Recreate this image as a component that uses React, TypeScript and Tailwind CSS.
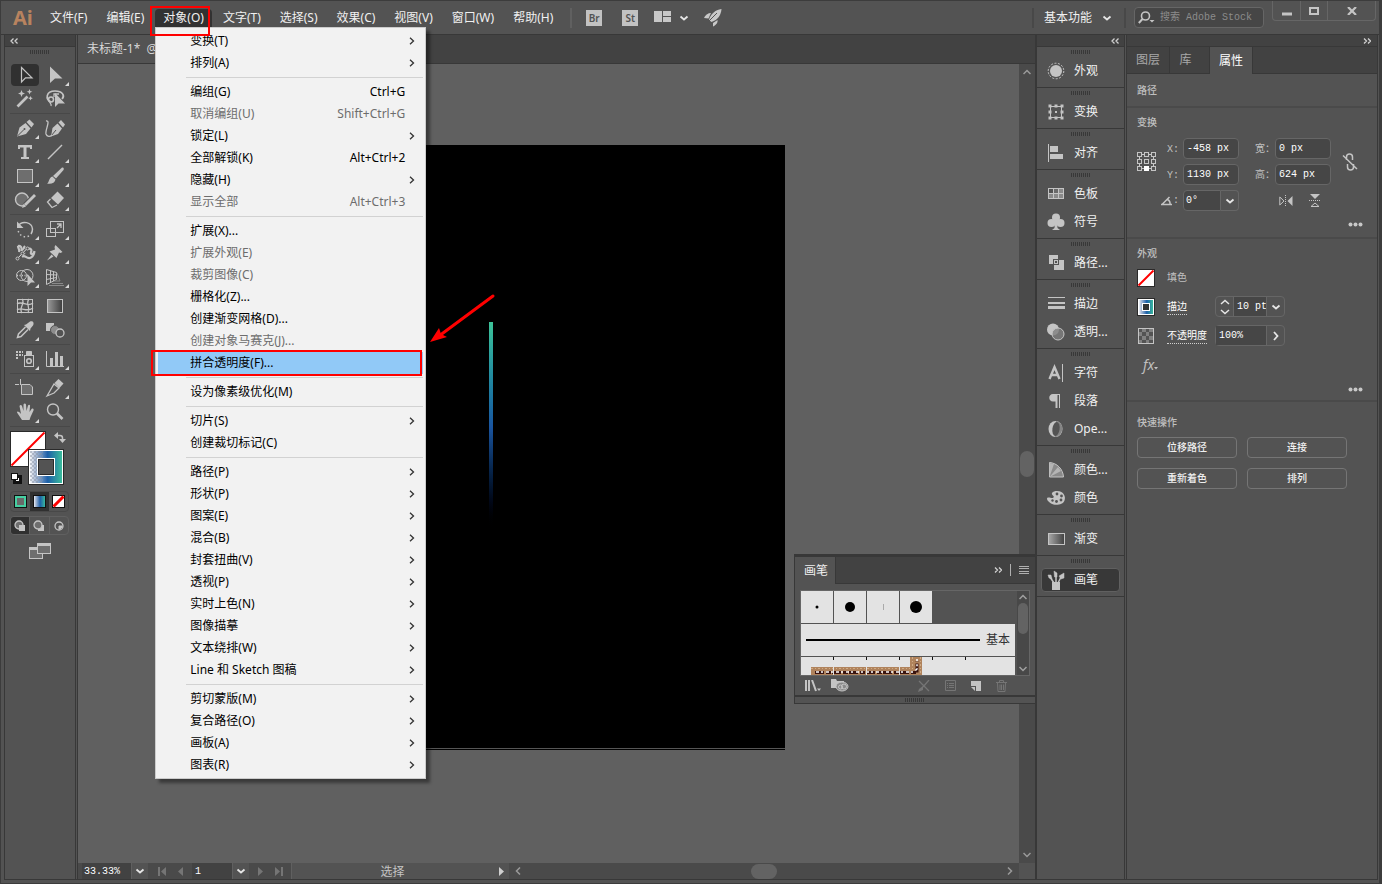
import React from "react";

type IconProps = { w?: number; h?: number; children: React.ReactNode };

function Svg({ w = 24, h = 24, children }: IconProps) {
  return (
    <svg
      width={w}
      height={h}
      viewBox={`0 0 ${w} ${h}`}
      fill="none"
      stroke="#c4c4c4"
      className="shrink-0"
      aria-hidden="true"
    >
      {children}
    </svg>
  );
}

function ChevronDown() {
  return (
    <Svg w={10} h={8}>
      <path d="M1.5 2.5 L5 5.5 L8.5 2.5" stroke="#e6e6e6" strokeWidth="1.8" />
    </Svg>
  );
}

function DoubleLeft() {
  return (
    <Svg w={8} h={6}>
      <path d="M3.5 .5 L1 3 L3.5 5.5 M7.5 .5 L5 3 L7.5 5.5" stroke="#d0d0d0" strokeWidth="1.3" />
    </Svg>
  );
}

function DoubleRight() {
  return (
    <Svg w={8} h={6}>
      <path d="M1 .5 L3.5 3 L1 5.5 M5 .5 L7.5 3 L5 5.5" stroke="#d0d0d0" strokeWidth="1.3" />
    </Svg>
  );
}

function Grip() {
  return (
    <Svg w={20} h={4}>
      <path d="M0 2 H20" stroke="#383838" strokeWidth="4" strokeDasharray="1 1" />
    </Svg>
  );
}

function Dots() {
  return (
    <Svg w={15} h={5}>
      <g fill="#c8c8c8" stroke="none">
        <circle cx="2.5" cy="2.5" r="2" />
        <circle cx="7.5" cy="2.5" r="2" />
        <circle cx="12.5" cy="2.5" r="2" />
      </g>
    </Svg>
  );
}

const F = "#c4c4c4";

const toolGroups: { name: string; more?: boolean; icon: React.ReactNode }[][] = [
  [
    { name: "选择工具", icon: <path d="M8.5 4.5 V19 L12.5 14.8 H19 Z" strokeWidth="1.2" /> },
    { name: "直接选择工具", more: true, icon: <path d="M7 3.5 V20 L12 15.5 H19.5 Z" fill={F} stroke="none" /> },
    {
      name: "魔棒工具",
      icon: (
        <>
          <path d="M4.5 19.5 L14.5 9.5" strokeWidth="2.6" />
          <g fill={F} stroke="none">
            <path d="M8.5 3 l1 2.5 2.5 1 -2.5 1 -1 2.5 -1 -2.5 -2.5 -1 2.5 -1z" />
            <path d="M16.5 2 l.8 2 2 .8 -2 .8 -.8 2 -.8 -2 -2 -.8 2 -.8z" />
            <path d="M17.5 9 l.7 1.6 1.6 .7 -1.6 .7 -.7 1.6 -.7 -1.6 -1.6 -.7 1.6 -.7z" />
          </g>
        </>
      ),
    },
    {
      name: "套索工具",
      icon: (
        <>
          <path d="M8 15 C2 12 3 4 12 4 C20 4 22 9 19 12" strokeWidth="1.7" />
          <circle cx="8" cy="12.5" r="2.5" strokeWidth="1.5" />
          <path d="M11 10 V7 H16 M7 14.5 C6 16 9 17 8 19" strokeWidth="1.3" />
          <path d="M12 6 V20 L15.5 16.5 H22 Z" fill={F} stroke="none" />
        </>
      ),
    },
  ],
  [
    {
      name: "钢笔工具",
      more: true,
      icon: (
        <>
          <path d="M4 20.5 L6.5 11.5 L12.5 7 L17.5 12.5 L13 18 Z" fill={F} stroke="none" />
          <path d="M13.5 6 L16.5 3.5 L21 8 L18.5 11.5 Z" fill={F} stroke="none" />
          <path d="M4.5 20 L11 13.5" stroke="#535353" />
          <circle cx="11.5" cy="13" r="1" fill="#535353" stroke="none" />
        </>
      ),
    },
    {
      name: "曲率工具",
      icon: (
        <>
          <path d="M8 20.5 L9.5 12 L14.5 7.5 L19 12.5 L15 18 Z" fill={F} stroke="none" />
          <path d="M15.5 6.5 L18 4 L22 8.5 L20 11.5 Z" fill={F} stroke="none" />
          <path d="M8 20 L13 14" stroke="#535353" />
          <path d="M3 5 C8 4 2 14 3 18 C4 21 7 21 9 19" strokeWidth="1.3" />
        </>
      ),
    },
    {
      name: "文字工具",
      more: true,
      icon: <path d="M5 5 H19 V9 H17 V7.5 H13.5 V17 H16 V19 H8 V17 H10.5 V7.5 H7 V9 H5 Z" fill={F} stroke="none" />,
    },
    { name: "直线段工具", more: true, icon: <path d="M5 19 L19 5" strokeWidth="1.5" /> },
    { name: "矩形工具", more: true, icon: <rect x="4.5" y="5.5" width="15" height="13" fill="#6e6e6e" /> },
    {
      name: "画笔工具",
      more: true,
      icon: (
        <g fill={F} stroke="none">
          <path d="M10 12 L19 3.5 C21 3 21 5 20.5 6 L13 14.5 Z" />
          <path d="M9.5 12.5 L12.5 15.5 C12 19 8 20.5 4 19.5 C6.5 18.5 5.5 13.5 9.5 12.5 Z" />
        </g>
      ),
    },
    {
      name: "Shaper 工具",
      more: true,
      icon: (
        <>
          <circle cx="9" cy="11.5" r="6.5" fill="#6e6e6e" strokeWidth="1.4" />
          <path d="M12 17 L21 8" stroke="#535353" strokeWidth="5" />
          <path d="M12 17 L22 7" strokeWidth="2.8" />
          <path d="M9 20 L10.5 16 L13 18.5 Z" fill={F} stroke="none" />
        </>
      ),
    },
    {
      name: "橡皮擦工具",
      more: true,
      icon: (
        <>
          <path d="M8 10 L14.5 3.5 L21 10 L15 16.5 Z" fill={F} stroke="none" />
          <path d="M7.5 11 L4.5 14 L9 19.5 L14 17" strokeWidth="1.3" />
        </>
      ),
    },
  ],
  [
    {
      name: "旋转工具",
      more: true,
      icon: (
        <>
          <path d="M5 9 C9 3 19 5 19.5 12 C19.5 14 19 15.5 18 17" strokeWidth="1.5" />
          <path d="M16 19 C12 21 6 19 5 13" strokeWidth="1.5" strokeDasharray="1.5 2.5" />
          <path d="M4 4.5 V11 H10.5 Z" fill={F} stroke="none" />
        </>
      ),
    },
    {
      name: "比例缩放工具",
      more: true,
      icon: (
        <>
          <rect x="7.5" y="4.5" width="13" height="11" />
          <rect x="3.5" y="11.5" width="9" height="8" />
          <path d="M14 11 L17.5 7.5 M14 7 H18 V11" strokeWidth="1.3" />
        </>
      ),
    },
    {
      name: "宽度工具",
      more: true,
      icon: (
        <>
          <path
            d="M5 5 C8 4 9 7 8.5 10 M12 5 C9 8 12 11 11 13 M15 8 C18 7 19 9 18 11 C17 14 21 14 21.5 10 M9 16 C12 13 13 18 17 17 C20 16 21 14 21.5 10 M6 11 C7 8 5 8 5 5"
            strokeWidth="2.2"
          />
          <path d="M4.5 17.5 L14.5 7" stroke="#535353" strokeWidth="3" />
          <path d="M4.5 17.5 L14.5 7" stroke="#e0e0e0" />
          <circle cx="4.5" cy="17.5" r="1.5" fill="#535353" />
          <circle cx="9.5" cy="12.5" r="1.5" fill="#535353" />
          <circle cx="14.5" cy="7.5" r="1.5" fill="#535353" />
        </>
      ),
    },
    {
      name: "操控变形工具",
      more: true,
      icon: (
        <g fill={F} stroke="none">
          <path d="M12.5 4 L19.5 11 L17.5 12 L16 11.5 L13.5 17 L6.5 10.5 L12 8.5 L11.5 6 Z" />
          <path d="M8.5 13.5 L10.5 15.5 L4 19.5 Z" />
        </g>
      ),
    },
    {
      name: "形状生成器工具",
      more: true,
      icon: (
        <>
          <circle cx="8.5" cy="10.5" r="5" />
          <circle cx="14" cy="10.5" r="6" />
          <path d="M4 10.5 H15" strokeDasharray="1 1.5" strokeWidth="1.5" />
          <path d="M14.5 9 V21 L18 17.5 H22 Z" fill={F} stroke="none" />
        </>
      ),
    },
    {
      name: "透视网格工具",
      more: true,
      icon: (
        <>
          <path d="M3.5 4.5 L13.5 7.5 V14.5 L3.5 19.5 Z M3.5 9.5 L13.5 10 M3.5 14.5 L13.5 12.5 M7.5 5.5 V17.5 M10.5 6.5 V16" />
          <path d="M14 8 L17 16 H11 M9 18.5 H20 M6 20.5 H21" stroke="#8a8a8a" />
        </>
      ),
    },
  ],
  [
    {
      name: "网格工具",
      icon: (
        <>
          <rect x="4.5" y="5.5" width="15" height="13" />
          <path d="M4 10 C9 6 14 14 20 9 M4 16 C9 12 13 19 20 14 M9 5 C13 9 5 14 9 19 M16 5 C12 10 18 13 15 19" strokeWidth="1.3" />
        </>
      ),
    },
    {
      name: "渐变工具",
      icon: (
        <>
          <defs>
            <linearGradient id="toolGrad">
              <stop offset="0" stopColor="#9a9a9a" />
              <stop offset="1" stopColor="#3c3c3c" />
            </linearGradient>
          </defs>
          <rect x="4.5" y="5.5" width="15" height="13" fill="url(#toolGrad)" />
        </>
      ),
    },
    {
      name: "吸管工具",
      more: true,
      icon: (
        <>
          <path d="M12.5 9 L5.5 16 L4.5 19.5 L8 18.5 L15 11.5" strokeWidth="1.5" />
          <path d="M11 7 L13 6.5 L17 3.5 C20 2.5 21.5 5 20 7.5 L17.5 10.5 L17 13 Z" fill={F} stroke="none" />
        </>
      ),
    },
    {
      name: "混合工具",
      icon: (
        <>
          <rect x="3" y="5" width="8" height="8" fill={F} stroke="none" />
          <circle cx="12" cy="12" r="4.5" fill="#8c8c8c" stroke="#535353" />
          <circle cx="17" cy="15" r="4" fill="#535353" strokeWidth="1.3" />
        </>
      ),
    },
  ],
  [
    {
      name: "符号喷枪工具",
      more: true,
      icon: (
        <>
          <path d="M3 5 H10 M3 8 H10 M3 11 H6" strokeWidth="2" strokeDasharray="2 1" />
          <rect x="11.5" y="8.5" width="9" height="11" />
          <path d="M13.5 4.5 H18.5 V8 H13.5 Z" fill={F} />
          <circle cx="16" cy="14" r="2.3" strokeWidth="1.6" />
        </>
      ),
    },
    {
      name: "柱形图工具",
      more: true,
      icon: (
        <>
          <path d="M3.5 4 V19.5 H21" />
          <path d="M8.5 19 V11 M13.5 19 V5 M18.5 19 V9" strokeWidth="3" />
        </>
      ),
    },
  ],
  [
    {
      name: "画板工具",
      icon: (
        <>
          <path d="M7.5 3 V9 M2 8.5 H6" />
          <path d="M8.5 8.5 H17 L19.5 11 V18.5 H8.5 Z" fill="#6e6e6e" />
        </>
      ),
    },
    {
      name: "切片工具",
      more: true,
      icon: (
        <>
          <path d="M4 20 L11 8 L16 12 L11 17 Z" strokeWidth="1.3" />
          <path d="M11.5 7 L15.5 3 L20.5 7.5 L16.5 12 Z" fill={F} stroke="none" />
        </>
      ),
    },
    {
      name: "抓手工具",
      more: true,
      icon: (
        <path
          d="M9 20 L4 12.5 C4 11 5.5 11 8 14 L6.5 6 C7 4.5 8.5 4.5 9 6 L10.5 11 V4.5 C11 3 12.5 3 13 4.5 L13.5 11 L15 5.5 C16 4 17.5 5 17 6.5 L16.5 12 L18.5 9 C20 8 21 9 20.5 10.5 L17.5 17 L16.5 20 Z"
          fill={F}
          stroke="none"
        />
      ),
    },
    {
      name: "缩放工具",
      icon: (
        <>
          <circle cx="10" cy="9.5" r="5.5" strokeWidth="1.4" />
          <path d="M14 13.5 L19.5 19" strokeWidth="2.6" />
        </>
      ),
    },
  ],
];

const dockGroups: { label: string; active?: boolean; icon: React.ReactNode }[][] = [
  [
    {
      label: "外观",
      icon: (
        <>
          <circle cx="10" cy="10" r="6" fill={F} stroke="none" />
          <circle cx="10" cy="10" r="7.8" strokeDasharray="2 1.5" />
        </>
      ),
    },
  ],
  [
    {
      label: "变换",
      icon: (
        <>
          <rect x="4.5" y="4.5" width="11" height="11" />
          <path d="M9 10 h2" strokeWidth="2" />
          <path
            d="M2.5 4 h3 M8.5 4 h3 M14.5 4 h3 M2.5 10 h3 M14.5 10 h3 M2.5 16 h3 M8.5 16 h3 M14.5 16 h3"
            strokeWidth="3"
          />
        </>
      ),
    },
  ],
  [
    {
      label: "对齐",
      icon: (
        <g fill={F} stroke="none">
          <rect x="2" y="1" width="1" height="18" />
          <rect x="4" y="3" width="8" height="6" />
          <rect x="4" y="11" width="13" height="5" />
        </g>
      ),
    },
  ],
  [
    {
      label: "色板",
      icon: (
        <>
          <rect x="2.5" y="4.5" width="15" height="10" fill="#8a8a8a" />
          <rect x="3" y="5" width="4" height="4" fill="#535353" stroke="none" />
          <rect x="8" y="5" width="4" height="4" fill="#6a6a6a" stroke="none" />
          <path d="M7.5 4.5 V15 M12.5 4.5 V15 M2 9.5 H18" />
        </>
      ),
    },
    {
      label: "符号",
      icon: (
        <g fill={F} stroke="none">
          <circle cx="10" cy="5.5" r="4" />
          <circle cx="5.5" cy="11" r="4" />
          <circle cx="14.5" cy="11" r="4" />
          <path d="M9 8 H11 L11.5 16 L14 18 H6 L8.5 16 Z" />
        </g>
      ),
    },
  ],
  [
    {
      label: "路径...",
      icon: (
        <>
          <path d="M3 2 H12 V6 H7 V11 H3 Z M13 7 H18 V17 H8 V12 H13 Z" fill={F} stroke="none" />
          <rect x="8.5" y="7.5" width="3" height="3" />
        </>
      ),
    },
  ],
  [
    {
      label: "描边",
      icon: (
        <g fill={F} stroke="none">
          <rect x="2" y="3" width="17" height="1" />
          <rect x="2" y="8" width="17" height="2" />
          <rect x="2" y="12" width="17" height="3" />
        </g>
      ),
    },
    {
      label: "透明...",
      icon: (
        <>
          <circle cx="7" cy="7.5" r="6" fill={F} stroke="none" />
          <circle cx="12" cy="12" r="6" fill="#808080" fillOpacity=".8" />
        </>
      ),
    },
  ],
  [
    {
      label: "字符",
      icon: (
        <>
          <path d="M3.5 16 L8.5 4 L13.5 16 M5.5 12 H11.5" strokeWidth="2.4" />
          <path d="M16.5 1 V19" />
        </>
      ),
    },
    {
      label: "段落",
      icon: (
        <path d="M7 3 H14 V17 H13 V4 H11.5 V17 H9.5 V10.5 H7 C2 10.5 2 3 7 3 Z" fill={F} stroke="none" />
      ),
    },
    {
      label: "Ope...",
      icon: (
        <>
          <ellipse cx="9.5" cy="10" rx="7" ry="8" fill={F} stroke="none" />
          <path d="M10 2 C19 3 18 17 9 18 Z" fill="#858585" stroke="none" />
          <ellipse cx="10" cy="10" rx="3.6" ry="7" fill="#535353" stroke="none" transform="rotate(8 10 10)" />
        </>
      ),
    },
  ],
  [
    {
      label: "颜色...",
      icon: (
        <>
          <path d="M3.5 2.5 C11 3 17 9 17.5 17 H3.5 Z" fill="#8a8a8a" />
          <path d="M3.5 17 V3 L8 4 Z M3.5 17 L12 7 L15 11 Z" fill="#b4b4b4" stroke="none" />
        </>
      ),
    },
    {
      label: "颜色",
      icon: (
        <>
          <path
            d="M11 3 C18 3 20 9 18.5 12.5 C17 17 9 18 5 15.5 C1 13 0 10 2 9.5 C4 9 6 11 7.5 9.5 C9 8 5 7 6 5 C7 3.5 9 3 11 3 Z"
            fill={F}
            stroke="none"
          />
          <g fill="#535353" stroke="none">
            <circle cx="11" cy="6" r="1.4" />
            <circle cx="15.5" cy="8" r="1.4" />
            <circle cx="15" cy="12" r="1.4" />
            <circle cx="10.5" cy="13.5" r="1.4" />
            <circle cx="6.5" cy="12.5" r="1.2" />
          </g>
        </>
      ),
    },
  ],
  [
    {
      label: "渐变",
      icon: (
        <>
          <defs>
            <linearGradient id="dockGrad">
              <stop offset="0" stopColor="#a8a8a8" />
              <stop offset="1" stopColor="#404040" />
            </linearGradient>
          </defs>
          <rect x="2.5" y="4.5" width="16" height="11" fill="url(#dockGrad)" />
        </>
      ),
    },
  ],
  [
    {
      label: "画笔",
      active: true,
      icon: (
        <>
          <rect x="6" y="12" width="8" height="8" fill={F} stroke="none" />
          <path d="M8 13 L4 7 M10 13 V6 M12 13 L15 7" strokeWidth="1.5" />
          <path d="M2 5 L5 5 L6 9 L3 8 Z M8 1 L11 3 L11 7 L8.5 7 Z M13 6 L18 3 L18 8 L15 9 Z" fill={F} strokeWidth=".5" />
        </>
      ),
    },
  ],
];

type MenuRow = { label: string; keys?: string; sub?: boolean; off?: boolean; hot?: boolean };

const objectMenu: MenuRow[][] = [
  [
    { label: "变换(T)", sub: true },
    { label: "排列(A)", sub: true },
  ],
  [
    { label: "编组(G)", keys: "Ctrl+G" },
    { label: "取消编组(U)", keys: "Shift+Ctrl+G", off: true },
    { label: "锁定(L)", sub: true },
    { label: "全部解锁(K)", keys: "Alt+Ctrl+2" },
    { label: "隐藏(H)", sub: true },
    { label: "显示全部", keys: "Alt+Ctrl+3", off: true },
  ],
  [
    { label: "扩展(X)..." },
    { label: "扩展外观(E)", off: true },
    { label: "裁剪图像(C)", off: true },
    { label: "栅格化(Z)..." },
    { label: "创建渐变网格(D)..." },
    { label: "创建对象马赛克(J)...", off: true },
    { label: "拼合透明度(F)...", hot: true },
  ],
  [{ label: "设为像素级优化(M)" }],
  [{ label: "切片(S)", sub: true }, { label: "创建裁切标记(C)" }],
  [
    { label: "路径(P)", sub: true },
    { label: "形状(P)", sub: true },
    { label: "图案(E)", sub: true },
    { label: "混合(B)", sub: true },
    { label: "封套扭曲(V)", sub: true },
    { label: "透视(P)", sub: true },
    { label: "实时上色(N)", sub: true },
    { label: "图像描摹", sub: true },
    { label: "文本绕排(W)", sub: true },
    { label: "Line 和 Sketch 图稿", sub: true },
  ],
  [
    { label: "剪切蒙版(M)", sub: true },
    { label: "复合路径(O)", sub: true },
    { label: "画板(A)", sub: true },
    { label: "图表(R)", sub: true },
  ],
];

function ObjectMenu() {
  return (
    <div className="absolute top-full left-0 z-30 w-[271px] border border-[#cccccc] bg-[#f2f2f2] p-[2px] text-xs text-black shadow-[4px_4px_3px_rgba(0,0,0,0.4)]">
      {objectMenu.map((group, i) => (
        <ul key={i}>
          {i > 0 && <li className="my-[3px] ml-7 h-px bg-[#d2d2d2]" />}
          {group.map((row) => (
            <li key={row.label}>
              <button
                disabled={row.off}
                className={`flex h-[22px] w-full items-center justify-between pr-2 pl-8 ${
                  row.hot ? "bg-[#91c9f7]" : ""
                } ${row.off ? "text-[#6d6d6d]" : ""}`}
              >
                <span>{row.label}</span>
                {row.keys && <span className="pr-[10px]">{row.keys}</span>}
                {row.sub && (
                  <Svg w={6} h={8}>
                    <path d="M1 .8 L4.5 4 L1 7.2" stroke="#333" strokeWidth="1.3" />
                  </Svg>
                )}
              </button>
            </li>
          ))}
        </ul>
      ))}
    </div>
  );
}

const menus = ["文件(F)", "编辑(E)", "对象(O)", "文字(T)", "选择(S)", "效果(C)", "视图(V)", "窗口(W)", "帮助(H)"];

function MenuBar() {
  return (
    <header className="flex h-[34px] shrink-0 items-center border-b border-[#383838] pl-3 text-xs text-[#f0f0f0]">
      <span className="w-[29px] text-xl leading-6 font-bold text-[#b8835f]">Ai</span>
      <nav className="flex gap-[3px]">
        {menus.map((m) => (
          <div key={m} className="relative">
            <button
              className={`h-[18px] rounded-t-sm px-2 leading-[18px] whitespace-nowrap ${
                m === "对象(O)" ? "bg-[#323232]" : ""
              }`}
            >
              {m}
            </button>
            {m === "对象(O)" && <ObjectMenu />}
          </div>
        ))}
      </nav>
      <span className="ml-[9px] h-5 w-[2px] bg-[#606060]" />
      <button className="ml-[14px] h-4 w-4 bg-[#c2c2c2] text-[10px] leading-4 font-semibold text-[#535353]">Br</button>
      <button className="ml-5 h-4 w-4 bg-[#c2c2c2] text-[10px] leading-4 font-semibold text-[#535353]">St</button>
      <button className="ml-4 flex items-center gap-2" aria-label="排列文档">
        <Svg w={17} h={14}>
          <path d="M0 0 H8 V11 H0 Z M9 0 H17 V5 H9 Z M9 6 H17 V11 H9 Z" fill="#c8c8c8" stroke="none" />
        </Svg>
        <ChevronDown />
      </button>
      <button className="ml-[15px]" aria-label="GPU 性能">
        <Svg w={18} h={18}>
          <g fill="#c8c8c8" stroke="none">
            <path d="M17.5 0 C11 1 6.5 5 5 11 L7.5 13 C14 11 17 6 17.5 0 Z" />
            <path d="M7 4 C4 4 1 6 0 9 L4.5 9.5 Z" />
            <path d="M13.5 11 L9 14 L9 17.5 C12 16 14 14 13.5 11 Z" />
          </g>
          <path d="M3 14 L13 4" stroke="#535353" />
        </Svg>
      </button>
      <div className="ml-auto flex h-full items-center">
        <span className="h-5 w-[2px] bg-[#484848]" />
        <button className="ml-[10px] flex items-center gap-[10px] whitespace-nowrap">
          基本功能
          <ChevronDown />
        </button>
        <span className="ml-3 h-5 w-[2px] bg-[#484848]" />
        <label className="ml-2 flex h-[21px] w-[130px] items-center gap-1 rounded-sm border border-[#666] bg-[#464646] px-[3px]">
          <Svg w={18} h={14}>
            <circle cx="7.5" cy="5" r="4" strokeWidth="1.6" />
            <path d="M4.5 8 L.8 12" strokeWidth="2" />
            <path d="M11.5 9 h5 l-2.5 2.5 z" fill={F} stroke="none" />
          </Svg>
          <input
            aria-label="搜索 Adobe Stock"
            placeholder="搜索 Adobe Stock"
            className="w-full min-w-0 bg-transparent font-['Liberation_Mono','Noto_Sans_CJK_SC',monospace] text-[10px] placeholder:text-[#8c8c8c]"
          />
        </label>
        <div className="mr-[3px] ml-2 flex h-5 self-start rounded-b-sm border border-t-0 border-[#666]">
          <button className="flex w-7 items-center justify-center border-r border-[#666]" aria-label="最小化">
            <Svg w={10} h={10}>
              <path d="M0 8 H10" strokeWidth="3" />
            </Svg>
          </button>
          <button className="flex w-[27px] items-center justify-center border-r border-[#666]" aria-label="最大化">
            <Svg w={10} h={8}>
              <rect x="1" y="1" width="8" height="6" strokeWidth="2" />
            </Svg>
          </button>
          <button className="flex w-[47px] items-center justify-center" aria-label="关闭">
            <Svg w={10} h={8}>
              <path d="M1 0 L9 8 M9 0 L1 8" strokeWidth="2.2" />
            </Svg>
          </button>
        </div>
      </div>
    </header>
  );
}

function FillStroke() {
  return (
    <Svg w={60} h={56}>
      <defs>
        <linearGradient id="strokeGrad">
          <stop offset="0" stopColor="#ffffff" />
          <stop offset=".15" stopColor="#b9c6dc" />
          <stop offset=".55" stopColor="#1d5fa8" />
          <stop offset="1" stopColor="#3cc09c" />
        </linearGradient>
        <pattern id="checks" width="4" height="4" patternUnits="userSpaceOnUse">
          <path d="M0 0 h2 v2 h-2 z M2 2 h2 v2 h-2 z" fill="#8a93a3" stroke="none" />
        </pattern>
      </defs>
      <rect x=".5" y=".5" width="35" height="35" fill="#fff" stroke="#2a2a2a" />
      <path d="M1.5 34.5 L34.5 1.5" stroke="#f00" strokeWidth="2" />
      <rect x="18" y="18" width="36" height="36" fill="#2a2a2a" stroke="none" />
      <rect x="19.5" y="19.5" width="33" height="33" fill="url(#strokeGrad)" stroke="#fff" />
      <rect x="20" y="20" width="13" height="32" fill="url(#checks)" stroke="none" opacity=".5" />
      <rect x="27.5" y="27.5" width="17" height="17" fill="#535353" stroke="#fff" />
      <rect x="28.5" y="28.5" width="15" height="15" stroke="#2a2a2a" />
      <path d="M47 4.5 H50 Q52.5 4.5 52.5 7 V9" strokeWidth="1.5" />
      <path d="M48 1 L44 4.5 L48 8 Z M49 8 L52.5 12 L56 8 Z" fill={F} stroke="none" />
      <rect x="4.5" y="45.5" width="6" height="6" fill="#fff" stroke="#111" strokeWidth="3" />
      <rect x="1.5" y="42.5" width="6" height="6" fill="#fff" stroke="#111" />
    </Svg>
  );
}

function Toolbar() {
  return (
    <aside className="flex w-[72px] shrink-0 flex-col border-x border-[#383838]">
      <div className="flex h-3 items-center border-b border-[#383838] bg-[#424242] pl-[5px]">
        <DoubleLeft />
      </div>
      <div className="flex h-4 items-start justify-center pt-[3px]">
        <Grip />
      </div>
      {toolGroups.map((group, i) => (
        <div key={i} className="mx-[5px] mb-[2px] grid grid-cols-2 border-b border-[#484848] pb-[2px]">
          {group.map((tool) => (
            <button
              key={tool.name}
              aria-label={tool.name}
              className={`relative m-px flex h-[22px] w-7 items-center justify-center rounded-sm ${
                tool.name === "选择工具" ? "bg-[#303030]" : ""
              }`}
            >
              <Svg>{tool.icon}</Svg>
              {tool.more && (
                <svg width="4" height="4" className="absolute right-0 bottom-0" aria-hidden="true">
                  <path d="M4 0 V4 H0 Z" fill="#d8d8d8" />
                </svg>
              )}
            </button>
          ))}
        </div>
      ))}
      <div className="mt-[2px] ml-[5px]">
        <FillStroke />
      </div>
      <div className="mx-[5px] mt-1 flex h-[21px] w-[59px] overflow-hidden rounded-sm border border-[#484848]">
        <button className="flex flex-1 items-center justify-center" aria-label="颜色">
          <Svg w={13} h={13}>
            <rect x=".5" y=".5" width="12" height="12" stroke="#111" />
            <rect x="2" y="2" width="9" height="9" fill="#6a6a6a" stroke="#46cfa2" strokeWidth="2" />
          </Svg>
        </button>
        <button className="flex flex-1 items-center justify-center bg-[#303030]" aria-label="渐变">
          <Svg w={13} h={13}>
            <rect x=".5" y=".5" width="12" height="12" fill="url(#strokeGrad)" stroke="#111" />
          </Svg>
        </button>
        <button className="flex flex-1 items-center justify-center" aria-label="无">
          <Svg w={13} h={13}>
            <rect x=".5" y=".5" width="12" height="12" fill="#fff" stroke="#111" />
            <path d="M1.5 11.5 L11.5 1.5" stroke="#f00" strokeWidth="3" />
          </Svg>
        </button>
      </div>
      <div className="mx-[5px] mt-1 flex h-[19px] w-[59px] overflow-hidden rounded-sm border border-[#606060]">
        <button className="flex flex-1 items-center justify-center bg-[#303030]" aria-label="正常绘图">
          <Svg w={12} h={12}>
            <circle cx="5" cy="5" r="4" fill="#6e6e6e" strokeWidth="1.3" />
            <rect x="5" y="5" width="6" height="6" fill={F} stroke="none" />
          </Svg>
        </button>
        <button className="flex flex-1 items-center justify-center border-x border-[#606060]" aria-label="背面绘图">
          <Svg w={12} h={12}>
            <rect x="5" y="5" width="6" height="6" fill={F} stroke="none" />
            <circle cx="5" cy="5" r="4" fill="#6e6e6e" strokeWidth="1.3" />
          </Svg>
        </button>
        <button className="flex flex-1 items-center justify-center" aria-label="内部绘图">
          <Svg w={12} h={12}>
            <circle cx="6" cy="6" r="4" fill="#535353" strokeWidth="1.3" />
            <path d="M6 6 H9 V7 L7 9 H6 Z" fill={F} />
          </Svg>
        </button>
      </div>
      <button className="mt-2 ml-6 w-[22px]" aria-label="更改屏幕模式">
        <Svg w={22} h={16}>
          <rect x=".5" y="5.5" width="13" height="10" fill="#6e6e6e" />
          <path d="M0 5.5 H13" strokeWidth="3" />
          <rect x="8.5" y=".5" width="13" height="10" fill="#6e6e6e" />
          <path d="M8 1.5 H22" strokeWidth="3" />
        </Svg>
      </button>
    </aside>
  );
}

function Brushes() {
  return (
    <section className="absolute -right-px bottom-[175px] z-10 w-[242px] border border-t-[3px] border-[#383838] bg-[#535353]">
      <div className="flex h-[27px] items-center border-b border-[#383838] bg-[#424242] text-xs">
        <h2 className="h-[27px] border-r border-[#383838] bg-[#535353] pr-[7px] pl-[9px] leading-7 text-[#f0f0f0]">画笔</h2>
        <span className="ml-auto">
          <DoubleRight />
        </span>
        <span className="mx-2 h-3 w-px bg-[#b0b0b0]" />
        <button className="mr-[6px]" aria-label="面板菜单">
          <Svg w={10} h={8}>
            <path d="M0 .5 H10 M0 2.5 H10 M0 5.5 H10 M0 7.5 H10" stroke="#b0b0b0" />
          </Svg>
        </button>
      </div>
      <div className="mx-[5px] mt-[6px] flex h-[86px] overflow-hidden border border-[#666]">
        <div className="flex flex-1 flex-col gap-px overflow-hidden">
          <div className="flex h-8 shrink-0 gap-px">
            {[1.5, 5, 0, 6].map((r) => (
              <button key={r} className="h-8 w-8 bg-[#e3e3e3]" aria-label={`${r * 2} pt`}>
                <Svg w={32} h={32}>
                  {r ? (
                    <circle cx="16" cy="16" r={r} fill="#000" stroke="none" />
                  ) : (
                    <path d="M16.5 13 V19" stroke="#aaa" />
                  )}
                </Svg>
              </button>
            ))}
          </div>
          <button className="flex h-8 shrink-0 items-center gap-[6px] bg-[#e3e3e3] px-[5px] text-xs text-[#333]">
            <span className="h-[2px] flex-1 bg-black" />
            基本
          </button>
          <div className="h-8 shrink-0 bg-[#e3e3e3]">
            <Svg w={214} h={19}>
              <g stroke="none" fill="#b0835c">
                <rect x="10" y="10" width="111" height="9" />
                <rect x="109" y="0" width="12" height="19" />
              </g>
              <path d="M10 11.5 H109 M111.5 0 V12 M119.5 0 V19" stroke="#d0ac86" strokeDasharray="2 2 1 2" />
              <path d="M14 15.5 H116 V4" stroke="#3a1410" strokeWidth="3" strokeDasharray="9 2 5 1" />
              <path d="M15 18.5 H114" stroke="#8a4a20" />
              <path d="M15 15 H113 L116 12 V2" stroke="#fff" strokeWidth="1.5" strokeDasharray="3 2 2 3" />
              <path d="M32.5 0 V3 M65.5 0 V3 M98.5 0 V3 M131.5 0 V3 M164.5 0 V3" stroke="#111" />
              <path d="M32.5 10 V19 M65.5 10 V19 M98.5 10 V19" stroke="#e3e3e3" />
            </Svg>
          </div>
        </div>
        <div className="ml-[2px] flex w-3 flex-col items-center bg-[#484848] py-[3px]">
          <Svg w={8} h={6}>
            <path d="M.5 5 L4 1.5 L7.5 5" stroke="#a0a0a0" strokeWidth="1.5" />
          </Svg>
          <span className="mt-[3px] h-[31px] w-[10px] rounded-full bg-[#636363]" />
          <span className="mt-auto">
            <Svg w={8} h={6}>
              <path d="M.5 1 L4 4.5 L7.5 1" stroke="#a0a0a0" strokeWidth="1.5" />
            </Svg>
          </span>
        </div>
      </div>
      <div className="flex h-[21px] items-center border-b-2 border-[#383838] pr-7 pl-[10px]">
        <button aria-label="画笔库菜单">
          <Svg w={16} h={12}>
            <path d="M1 0 V11 M4 0 V11 M7 0 L11 11" strokeWidth="2" />
            <path d="M12 8.5 h4 l-2 2.5 z" fill={F} stroke="none" />
          </Svg>
        </button>
        <button className="ml-[10px]" aria-label="库面板">
          <Svg w={18} h={13}>
            <path d="M0 0 H5 L6 2 H13 V9 H0 Z" fill={F} stroke="none" />
            <ellipse cx="11" cy="7.5" rx="6" ry="4.5" fill="#8a8a8a" />
            <circle cx="9.5" cy="8" r="2" />
            <circle cx="13" cy="7.5" r="2.5" />
          </Svg>
        </button>
        <div className="ml-auto flex items-center gap-[15px]">
          <button aria-label="移去画笔描边">
            <Svg w={12} h={12}>
              <path d="M1 1 L11 11 M11 0 L5 7" stroke="#757575" strokeWidth="1.3" />
              <path d="M5 6 L1 9 L0 12 L5 10 Z" fill="#757575" stroke="none" />
            </Svg>
          </button>
          <button aria-label="所选对象的选项">
            <Svg w={11} h={11}>
              <path
                d="M.5 .5 H10.5 V10.5 H.5 Z M2 3.5 H3 M4 3.5 H9 M2 5.5 H3 M4 5.5 H9 M2 7.5 H3 M4 7.5 H9"
                stroke="#757575"
              />
            </Svg>
          </button>
          <button aria-label="新建画笔">
            <Svg w={10} h={10}>
              <path d="M0 0 H10 V10 H5 V5 H0 Z M0 6 H4 V10 Z" fill={F} stroke="none" />
            </Svg>
          </button>
          <button aria-label="删除画笔">
            <Svg w={11} h={12}>
              <path
                d="M0 2.5 H11 M3.5 2 V.5 H7.5 V2 M1.5 3 L2 11.5 H9 L9.5 3 M4 4.5 V10 M5.5 4.5 V10 M7.5 4.5 V10"
                stroke="#757575"
              />
            </Svg>
          </button>
        </div>
      </div>
      <div className="flex h-[6px] items-center justify-center">
        <Grip />
      </div>
    </section>
  );
}

function StatusBar() {
  return (
    <footer className="flex h-4 shrink-0 items-center bg-[#4a4a4a] pl-1 font-['Liberation_Mono','Noto_Sans_CJK_SC',monospace] text-[10px] text-white">
      <select aria-label="缩放" className="h-4 w-[49px] appearance-none bg-[#424242] px-[2px]">
        <option>33.33%</option>
      </select>
      <span className="flex h-4 w-[17px] items-center justify-center border-l border-[#606060] bg-[#535353]">
        <ChevronDown />
      </span>
      <div className="flex h-4 w-11 items-center justify-center gap-3">
        <button aria-label="首项">
          <Svg w={8} h={9}>
            <path d="M1 0 V9" stroke="#757575" strokeWidth="2" />
            <path d="M8 0 V9 L3 4.5 Z" fill="#757575" stroke="none" />
          </Svg>
        </button>
        <button aria-label="上一项">
          <Svg w={5} h={9}>
            <path d="M5 0 V9 L0 4.5 Z" fill="#757575" stroke="none" />
          </Svg>
        </button>
      </div>
      <select aria-label="画板导航" className="h-4 w-10 appearance-none bg-[#424242] px-[3px]">
        <option>1</option>
      </select>
      <span className="flex h-4 w-[17px] items-center justify-center border-l border-[#606060] bg-[#535353]">
        <ChevronDown />
      </span>
      <div className="flex h-4 w-[43px] items-center justify-center gap-3 border-r border-[#606060]">
        <button aria-label="下一项">
          <Svg w={5} h={9}>
            <path d="M0 0 V9 L5 4.5 Z" fill="#757575" stroke="none" />
          </Svg>
        </button>
        <button aria-label="末项">
          <Svg w={8} h={9}>
            <path d="M7 0 V9" stroke="#757575" strokeWidth="2" />
            <path d="M0 0 V9 L5 4.5 Z" fill="#757575" stroke="none" />
          </Svg>
        </button>
      </div>
      <span className="h-4 w-[201px] bg-[#535353] text-center text-xs leading-5 text-[#c4c4c4]">选择</span>
      <button className="flex h-4 w-4 items-center justify-center bg-[#535353]" aria-label="状态菜单">
        <Svg w={5} h={9}>
          <path d="M0 0 V9 L5 4.5 Z" fill="#d0d0d0" stroke="none" />
        </Svg>
      </button>
      <div className="flex flex-1 items-center justify-between px-[6px]">
        <Svg w={6} h={8}>
          <path d="M5 .5 L1.5 4 L5 7.5" stroke="#9a9a9a" strokeWidth="1.5" />
        </Svg>
        <span className="h-[15px] w-[26px] rounded-full bg-[#636363]" />
        <Svg w={6} h={8}>
          <path d="M1 .5 L4.5 4 L1 7.5" stroke="#9a9a9a" strokeWidth="1.5" />
        </Svg>
      </div>
      <span className="h-4 w-4 bg-[#535353]" />
    </footer>
  );
}

function Workspace() {
  return (
    <main className="relative flex min-w-0 flex-1 flex-col border-x border-[#383838]">
      <div className="flex h-[29px] shrink-0 border-b border-[#383838] bg-[#424242]">
        <button className="w-[200px] bg-[#535353] pl-[9px] text-left text-xs text-[#d8d8d8]">未标题-1* &nbsp;@</button>
      </div>
      <div className="flex min-h-0 flex-1">
        <div className="relative flex-1 overflow-hidden bg-[#606060]">
          <div className="absolute top-[81px] left-[279px] h-[605px] w-[428px] bg-black">
            <div className="h-[604px] border-b border-[#555]" />
            <div className="absolute top-[177px] left-[132px] h-[210px] w-1 bg-linear-to-b from-[#3dc398] via-[#1a55a0] to-black" />
          </div>
        </div>
        <div className="flex w-4 flex-col items-center justify-between bg-[#4a4a4a] py-[5px]">
          <Svg w={8} h={6}>
            <path d="M.5 5 L4 1.5 L7.5 5" stroke="#9a9a9a" strokeWidth="1.5" />
          </Svg>
          <span className="h-[26px] w-[14px] rounded-full bg-[#636363]" />
          <Svg w={8} h={6}>
            <path d="M.5 1 L4 4.5 L7.5 1" stroke="#9a9a9a" strokeWidth="1.5" />
          </Svg>
        </div>
      </div>
      <StatusBar />
      <Brushes />
    </main>
  );
}

function Dock() {
  return (
    <aside className="mr-px flex w-[89px] shrink-0 flex-col border-x border-[#383838]">
      <div className="flex h-3 items-center justify-end border-b border-[#383838] bg-[#424242] pr-[5px]">
        <DoubleLeft />
      </div>
      {dockGroups.map((group, i) => (
        <div key={i} className="border-b border-[#383838] pt-[3px] pb-[2px]">
          <div className="flex h-[7px] items-start justify-center">
            <Grip />
          </div>
          {group.map((item) => (
            <button key={item.label} className="flex h-7 w-full items-center px-1 text-xs text-[#f0f0f0]">
              <span
                className={`flex h-6 w-full items-center gap-2 rounded-sm border pl-1 ${
                  item.active ? "border-[#606060] bg-[#383838]" : "border-transparent"
                }`}
              >
                <Svg w={20} h={20}>
                  {item.icon}
                </Svg>
                {item.label}
              </span>
            </button>
          ))}
        </div>
      ))}
    </aside>
  );
}

function Field({ label, value }: { label: string; value: string }) {
  return (
    <label className="flex items-center gap-1">
      <span className="w-4 pt-[2px] text-right whitespace-nowrap text-[#c0c0c0]">{label}</span>
      <input
        defaultValue={value}
        className="h-[21px] w-14 rounded-sm border border-[#666] bg-[#464646] px-[3px] text-white"
      />
    </label>
  );
}

function Properties() {
  return (
    <aside className="flex w-[252px] shrink-0 flex-col border-x border-[#383838] font-['Liberation_Mono','Noto_Sans_CJK_SC',monospace] text-[10px] text-[#c0c0c0]">
      <div className="flex h-3 items-center justify-end border-b border-[#383838] bg-[#424242] pr-[6px]">
        <DoubleRight />
      </div>
      <div className="flex h-[27px] border-b border-[#383838] bg-[#424242] font-['Noto_Sans','Noto_Sans_CJK_SC',sans-serif] text-xs text-[#a8a8a8]">
        <button className="w-[43px] border-r border-[#383838]">图层</button>
        <button className="w-10 border-r border-[#383838] pr-2">库</button>
        <button className="h-[27px] w-[43px] border-r border-[#383838] bg-[#535353] text-white">属性</button>
      </div>
      <h2 className="border-b-2 border-[#4a4a4a] px-[10px] pt-[10px] pb-[6px] leading-4 font-medium">路径</h2>
      <section className="border-b-2 border-[#4a4a4a] px-[10px] pt-2 pb-[6px]">
        <h2 className="leading-4 font-medium">变换</h2>
        <div className="mt-[6px] flex items-center">
          <Svg w={20} h={20}>
            <path d="M3 2.5 H17 M3 16.5 H17 M2.5 3 V17 M16.5 3 V17" stroke="#c8c8c8" />
            <g fill="#535353">
              {[0.5, 7.5, 14.5].map((y) =>
                [0.5, 7.5, 14.5].map((x) => <rect key={`${x}-${y}`} x={x} y={y} width="4" height="4" />)
              )}
            </g>
            <rect x="7" y="14" width="5" height="5" fill="#fff" stroke="none" />
          </Svg>
          <div className="ml-[6px] grid grid-cols-2 gap-x-4 gap-y-[5px]">
            <Field label="X:" value="-458 px" />
            <Field label="宽：" value="0 px" />
            <Field label="Y:" value="1130 px" />
            <Field label="高：" value="624 px" />
          </div>
          <button className="ml-[11px]" aria-label="约束宽度和高度比例">
            <Svg w={16} h={18}>
              <path
                d="M4.5 7 V4 Q4.5 1 7.5 1 Q10.5 1 10.5 4 V7 M5.5 11 V14 Q5.5 17 8.5 17 Q11.5 17 11.5 14 V11 M1 2.5 L15 16"
                strokeWidth="1.5"
              />
            </Svg>
          </button>
        </div>
        <div className="mt-[5px] flex items-center">
          <label className="ml-6 flex items-center gap-1">
            <span className="flex items-center">
              <Svg w={12} h={10}>
                <path d="M1 8.5 L8.5 1 M0 8.5 H11 M6.5 3.5 Q9.5 5 9 8.5" strokeWidth="1.5" />
              </Svg>
              :
            </span>
            <select
              aria-label="旋转"
              className="h-[21px] w-[38px] appearance-none rounded-l-sm border border-[#666] bg-[#464646] px-[2px] text-white"
            >
              <option>0°</option>
            </select>
          </label>
          <span className="flex h-[21px] w-[18px] items-center justify-center rounded-r-sm border border-l-0 border-[#666]">
            <ChevronDown />
          </span>
          <button className="ml-10" aria-label="水平轴翻转">
            <Svg w={14} h={12}>
              <path d="M.8 2 V10 L5 6 Z" />
              <path d="M13.5 1 V11 L8.5 6 Z" fill={F} stroke="none" />
              <path d="M6.5 0 V12" strokeDasharray="1 1" />
            </Svg>
          </button>
          <button className="ml-4" aria-label="垂直轴翻转">
            <Svg w={12} h={14}>
              <path d="M1 0 H11 L6 5 Z" fill={F} stroke="none" />
              <path d="M2 12.5 H10 L6 9 Z" />
              <path d="M0 6.5 H12" strokeDasharray="1 1" />
            </Svg>
          </button>
        </div>
        <button className="mt-[7px] mr-1 ml-auto block py-1" aria-label="更多选项">
          <Dots />
        </button>
      </section>
      <section className="border-b-2 border-[#4a4a4a] px-[10px] pt-2 pb-1">
        <h2 className="leading-4 font-medium">外观</h2>
        <div className="flex h-[29px] items-center">
          <Svg w={18} h={18}>
            <rect x=".5" y=".5" width="17" height="17" fill="#fff" stroke="#2a2a2a" />
            <path d="M1.5 16.5 L16.5 1.5" stroke="#f00" strokeWidth="2" />
          </Svg>
          <span className="ml-3 pt-[2px]">填色</span>
        </div>
        <div className="flex h-[29px] items-center text-white">
          <Svg w={18} h={18}>
            <rect x=".5" y=".5" width="17" height="17" stroke="#2a2a2a" />
            <rect x="1.5" y="1.5" width="15" height="15" fill="url(#strokeGrad)" stroke="#fff" />
            <rect x="5.5" y="5.5" width="7" height="7" fill="#333" stroke="#fff" />
          </Svg>
          <button className="ml-3 border-b border-dotted border-[#d0d0d0] pt-[3px] leading-3">描边</button>
          <div className="mr-[82px] ml-auto flex h-[21px] items-center rounded-sm border border-[#666]">
            <button className="w-[17px] pl-1" aria-label="调整描边粗细">
              <Svg w={10} h={16}>
                <path d="M1 5 L5 1.5 L9 5 M1 11 L5 14.5 L9 11" stroke="#e6e6e6" strokeWidth="1.5" />
              </Svg>
            </button>
            <input
              aria-label="描边粗细"
              defaultValue="10 pt"
              className="h-[19px] w-[34px] border-x border-[#666] bg-[#464646] pl-[3px]"
            />
            <button className="flex w-[17px] justify-center" aria-label="描边粗细预设">
              <ChevronDown />
            </button>
          </div>
        </div>
        <div className="flex h-[29px] items-center text-white">
          <Svg w={18} h={18}>
            <rect x="1.5" y="1.5" width="15" height="15" fill="#808080" />
            <path
              d="M2 2 h3 v3 h-3z M9 2 h3 v3 h-3z M5 5 h4 v4 h-4z M12 5 h4 v4 h-4z M2 9 h3 v4 h-3z M9 9 h3 v4 h-3z M5 13 h4 v3 h-4z M12 13 h4 v3 h-4z"
              fill="#535353"
              stroke="none"
            />
          </Svg>
          <label htmlFor="opacity" className="ml-3 border-b border-dotted border-[#d0d0d0] pt-[3px] leading-3">
            不透明度
          </label>
          <div className="mr-[82px] ml-auto flex h-[21px] items-center rounded-sm border border-[#666]">
            <input
              id="opacity"
              defaultValue="100%"
              className="h-[19px] w-[51px] border-r border-[#666] bg-[#464646] pl-[3px]"
            />
            <button className="flex w-[17px] justify-center" aria-label="不透明度滑块">
              <Svg w={6} h={10}>
                <path d="M1 1 L4.5 5 L1 9" stroke="#e6e6e6" strokeWidth="1.8" />
              </Svg>
            </button>
          </div>
        </div>
        <button className="ml-[6px] flex h-[30px] items-center font-['Noto_Sans',sans-serif] text-sm italic" aria-label="选取效果">
          fx
          <span className="self-end pb-[2px]">
            <Svg w={4} h={12}>
              <path d="M0 1 H4 L2 3.5 Z" fill={F} stroke="none" />
            </Svg>
          </span>
        </button>
        <button className="mt-[3px] mr-1 ml-auto block py-1" aria-label="更多选项">
          <Dots />
        </button>
      </section>
      <section className="px-[10px] pt-[14px]">
        <h2 className="leading-4 font-medium">快速操作</h2>
        <div className="mt-[5px] mr-5 grid grid-cols-2 gap-[10px] text-[#f0f0f0]">
          {["位移路径", "连接", "重新着色", "排列"].map((a) => (
            <button key={a} className="h-[21px] rounded-sm border border-[#757575] pt-[2px] font-medium">
              {a}
            </button>
          ))}
        </div>
      </section>
    </aside>
  );
}

function Annotations() {
  return (
    <svg
      className="pointer-events-none absolute top-0 left-0 z-40"
      width="500"
      height="380"
      fill="none"
      stroke="#f00"
      aria-hidden="true"
    >
      <rect x="150" y="6" width="58" height="28" strokeWidth="2" />
      <rect x="151" y="350" width="269" height="24" strokeWidth="2" />
      <path d="M492 295 L438 335" strokeWidth="3" strokeLinecap="round" />
      <path d="M429 341 L438 327 L440 333 L446 336 Z" fill="#f00" stroke="none" />
    </svg>
  );
}

function App() {
  return (
    <div className="relative flex min-h-screen flex-col border border-r-[3px] border-[#3c3c3c] bg-[#535353] font-['Noto_Sans','Noto_Sans_CJK_SC',sans-serif] text-[#f0f0f0]">
      <MenuBar />
      <div className="mr-px mb-[3px] ml-[3px] flex min-h-0 flex-1 border-b border-[#383838]">
        <Toolbar />
        <div className="w-px shrink-0" />
        <Workspace />
        <Dock />
        <Properties />
      </div>
      <Annotations />
    </div>
  );
}

export default App;
